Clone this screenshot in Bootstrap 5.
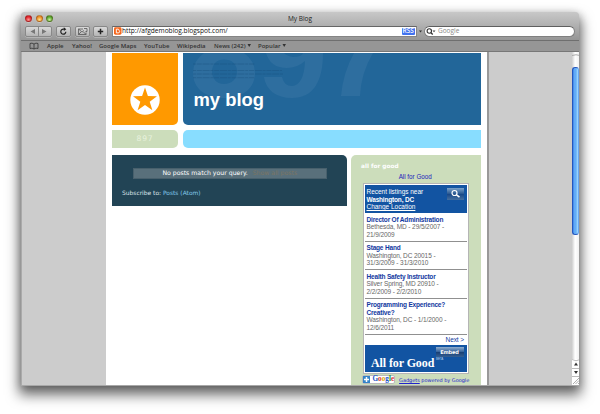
<!DOCTYPE html>
<html lang="en">
<head>
<meta charset="utf-8">
<title>My Blog</title>
<link href="https://cdn.jsdelivr.net/npm/bootstrap@5.3.0/dist/css/bootstrap.min.css" rel="stylesheet">
<style>
html,body{width:600px;height:414px;overflow:hidden}
body{background:#fff;font-family:"Open Sans","Noto Sans",sans-serif;font-size:6.5px;line-height:1;color:#222}
.win{width:558px;height:373px;margin:12px 0 0 21px;border-radius:3px 3px 0 0;box-shadow:0 8px 13px 2px rgba(0,0,0,.57),0 2px 9px rgba(0,0,0,.22)}
.chrome{height:29px;background:linear-gradient(#c8c8c8,#969696);border-radius:3px 3px 0 0;border-bottom:1px solid #6f6f6f}
.titlebar{height:13px;padding-top:2px}
.lights{left:4px;top:3px;gap:3.7px}
.light{width:7px;height:7px;border-radius:50%;border:1px solid rgba(60,20,10,.35);box-shadow:0 .5px 0 #ddd}
.lr{background:radial-gradient(circle at 50% 75%,#ff9b96,#e1222a 65%)}
.ly{background:radial-gradient(circle at 50% 75%,#ffe58a,#ec8d27 65%)}
.lg{background:radial-gradient(circle at 50% 75%,#cdf39b,#56a42c 65%)}
.tools{height:13px;padding:1px 4px 0 3.5px}
.tb{height:11px;border:1px solid #888;border-radius:2px;background:linear-gradient(#d9d9d9,#b4b4b4);box-shadow:0 .5px 0 #ccc}
.url{width:306px;height:10.5px;background:#fff;border:1px solid #858585;border-top-color:#666;margin-left:4px;font-size:6.6px;color:#111;padding:0 1px}
.rss{background:#4173ef;color:#fff;border-radius:1px;width:13.5px;height:7.5px;font-size:6.5px;font-weight:600}
.search{width:151.5px;height:11px;border-radius:6px;background:#fff;border:1px solid #808080;border-top-color:#5e5e5e;font-size:6.5px;color:#888}
.marks{height:11px;background:#969696;border-bottom:1px solid #777;font-weight:600;font-size:6px;color:#333;padding-left:8px;white-space:nowrap}
.view{height:333.5px;background:#ccc;border-left:1px solid #aaa;border-bottom:1px solid #a8a8a8;overflow:hidden}
.page{width:383px;margin-left:84px;background:#fff;border-right:2px solid #999;padding:1px 6px 0;font-family:"DejaVu Sans",sans-serif}
.logo{width:66px;height:72px;background:#f90;border-radius:0 0 5px 0}
.hero{width:297.5px;height:72px;background:#226699;border-radius:0 0 0 5px;overflow:hidden}
.hero h1{left:10.5px;top:37px;font:bold 18.4px/20px "Liberation Sans",sans-serif;color:#fff;white-space:nowrap}
.tag{width:66px;height:18px;background:#cdb;border-radius:0 5px 5px 0;color:#e8f2de;font-size:7.6px;letter-spacing:.8px}
.bar{width:297.5px;height:18px;background:#8df;border-radius:5px 0 0 5px}
.posts{width:235px;height:51.5px;background:#245;border-radius:0 5px 0 0;color:#dde6ea;padding:13px 21px 0}
.status{height:11px;background:#59707b;border:1px solid #48606c;font-size:6.2px;color:#fff;white-space:nowrap;width:193.5px}
.sub{font-size:5.95px;margin:11px 0 0 -11px}
.side{width:129.5px;height:240px;background:#cdb;border-radius:5px 0 0 0;padding:8px 12px 0}
.side h2{font:bold 5.8px/7px "DejaVu Sans",sans-serif;color:#fff;margin:0 0 0 -2px}
.aglink{font:6.3px/8px "Liberation Sans",sans-serif;color:#22b;margin:3px 1px 0 0}
.gadget{width:105.5px;height:191px;background:#fff;border:1px solid #b5b5b5;padding:1px;margin-top:2.5px;font:6.5px/7.6px "Liberation Sans",sans-serif;color:#666;letter-spacing:-.09px}
.gadget b{color:#1138a0;letter-spacing:-.18px}
.near{height:28px;background:#1254a2;color:#fff;padding:3px 1.5px;letter-spacing:-.02px}
.near .glass{margin-right:1px}
.near b{color:#fff}
.item{padding:2.6px 1.5px 0;border-bottom:1px solid #909090;white-space:nowrap}
.glass{width:17px;height:12px;background:linear-gradient(#7ba2cb,#26558f 50%,#174787 51%,#456f9f)}
.foot{height:27px;background:#1254a2}
.foot .nm{font:bold 12px/12px "Liberation Serif",serif;color:#fff;left:6px;top:12.5px;white-space:nowrap;letter-spacing:-.1px}
.embed{right:3px;top:2.5px;width:28px;height:10px;background:linear-gradient(#92aece,#315f98 50%,#173f75 51%,#365f91);color:#fff;font:bold 5px/11px "DejaVu Sans",sans-serif;letter-spacing:-.1px}
.pow{font:4.95px/6px "DejaVu Sans",sans-serif;color:#22c;white-space:nowrap;margin-left:-1px}
.gbtn{width:34.5px;height:9px;background:#fff;border:1px solid #bbb;border-radius:2px;font:bold 7.2px/7px "Liberation Serif",serif}
.sb{width:7.5px;background:linear-gradient(90deg,#cfcfcf,#fff 45%,#f1f1f1)}
.thumb{height:168px;margin-top:6px;border-radius:3px;border:1px solid #2457be;border-right-color:#6aa5ee;background:linear-gradient(90deg,#3b83e8,#6fb6fa 40%,#5ca8f6 55%,#a8e0ff)}
</style>
</head>
<body>
<div class="win">
 <div class="chrome">
  <div class="titlebar position-relative d-flex justify-content-center align-items-center">
   <div class="lights position-absolute d-flex"><i class="light lr"></i><i class="light ly"></i><i class="light lg"></i></div>
   <span>My Blog</span>
  </div>
  <div class="tools d-flex align-items-start">
   <div class="tb d-flex" style="width:27px"><svg width="25" height="9"><path d="M12.500 0V9" stroke="#888"/><path d="M9 2V7L4.500 4.500ZM16 2V7L20.500 4.500Z" fill="#777"/></svg></div>
   <div class="tb" style="width:15px;margin-left:4px"><svg class="d-block" width="13" height="9"><path d="M8.800 4.700A2.500 2.500 0 1 1 6.500 2.200H7.500" fill="none" stroke="#222" stroke-width="1.200"/><path d="M6.800 .3L9.300 2.200 6.800 4Z" fill="#222"/></svg></div>
   <div class="tb" style="width:15px;margin-left:4px"><svg class="d-block" width="13" height="9" fill="none" stroke="#555" stroke-width=".8"><path d="M2.500 2H7M2.500 2V7.500H10V5.500M2.500 2L6 5 8 3.500M2.500 7.500L5 5M10 7.500L7.500 5M8 1.500H11V4.500H9.500"/></svg></div>
   <div class="tb" style="width:15px;margin-left:3.5px"><svg class="d-block" width="13" height="9"><path d="M6.500 1.800V7.200M3.800 4.500H9.200" stroke="#222" stroke-width="1.500"/></svg></div>
   <div class="url d-flex align-items-center">
    <svg width="7.500" height="8" viewBox="0 0 8 8"><rect width="8" height="8" rx="1.500" fill="#f5661c"/><path d="M2.500 2H4.300Q5.300 2 5.300 3.500Q6 3.600 6 4.500Q6 6 4.500 6H2.500Z" fill="none" stroke="#fff" stroke-width="1"/></svg>
    <span style="margin-left:.5px">http://afgdemoblog.blogspot.com/</span>
    <span class="rss ms-auto d-flex align-items-center justify-content-center">RSS</span>
   </div>
   <svg width="3" height="11" style="margin-left:2px"><path d="M0 4.500H3L1.500 6.500Z" fill="#333"/></svg>
   <div class="search d-flex align-items-center" style="margin-left:2px"><svg width="12" height="9"><circle cx="4.300" cy="4" r="2.200" fill="none" stroke="#333" stroke-width="1.100"/><path d="M6 5.700L7.700 7.500" stroke="#333" stroke-width="1.300"/><path d="M7.500 3.500H10.500L9 5.200Z" fill="#444"/></svg><span style="margin-left:1px">Google</span></div>
  </div>
 </div>
 <div class="marks d-flex align-items-center">
  <svg width="10" height="8" fill="none" stroke="#333" stroke-width=".8"><path d="M5 2Q3 .5 1 1.500V6.500Q3 5.500 5 7Q7 5.500 9 6.500V1.500Q7 .5 5 2V7"/></svg>
  <span style="width:25px;margin-left:8px">Apple</span><span style="width:27px">Yahoo!</span><span style="width:45px">Google Maps</span><span style="width:33px">YouTube</span><span style="width:37px">Wikipedia</span>
  <span style="width:44px">News (242)<svg width="5" height="4"><path d="M1.500 0H5L3.200 3Z" fill="#333"/></svg></span><span>Popular<svg width="5" height="4"><path d="M1.500 0H5L3.200 3Z" fill="#333"/></svg></span>
 </div>
 <div class="view d-flex">
  <div class="page flex-shrink-0">
   <div class="d-flex" style="gap:5px">
    <div class="logo d-flex justify-content-center"><svg width="30" height="30" viewBox="-15 -15 30 30" style="margin-top:32px"><circle r="14.700" fill="#fff"/><path d="M0 -12.500L2.900 -3.900 12 -3.800 4.700 1.700 7.400 10.300 0 5.100 -7.400 10.300 -4.700 1.700 -12 -3.800 -2.900 -3.900Z" fill="#f90"/></svg></div>
    <div class="hero position-relative"><svg class="d-block" width="297" height="72"><g fill="#2e6e9f"><path fill-rule="evenodd" d="M21 0Q10 8 10 20C10 35 22 45 41 45S72 35 72 20Q72 8 61 0ZM41 6.500C33 6.500 29 12 29 18.500S33 31 41 31 54 26 54 18.500 49 6.500 41 6.500Z"/><path d="M83 0C86 10 93 15 104 15Q114 15 122 8Q121 32 109 33Q101 33 99 24H81C83 37 93 45 109 45C130 45 140 29 140 0H120Q119 4 110 4Q104 3 101 0Z"/><path d="M171 0Q160 20 158 43H177Q178 20 190 0Z"/></g><g stroke="#1b527f" stroke-width=".8" stroke-dasharray="3 .8 5 .8 7 .8" opacity=".5"><path d="M10 11H72M10 17.500H99M10 21H100M10 24.700H72"/></g></svg><h1 class="position-absolute m-0">my blog</h1></div>
   </div>
   <div class="d-flex" style="gap:5px;margin-top:5px"><div class="tag d-flex align-items-center justify-content-center">897</div><div class="bar"></div></div>
   <div class="d-flex align-items-start" style="gap:4px;margin-top:6.5px">
    <div class="posts"><div class="status d-flex align-items-center justify-content-center"><span>No posts match your query.</span><span style="color:#7b7563;margin-left:5px">Show all posts</span></div><div class="sub"><span>Subscribe to:</span> <span style="color:#80c8ea">Posts (Atom)</span></div></div>
    <div class="side">
     <h2>all for good</h2>
     <div class="aglink text-center">All for Good</div>
     <div class="gadget">
      <div class="near d-flex justify-content-between"><div>Recent listings near<br><b>Washington, DC</b><br><u>Change Location</u></div><div class="glass"><svg class="d-block" width="17" height="12" fill="none" stroke="#fff"><circle cx="7.500" cy="5" r="2.500" stroke-width="1.200"/><path d="M9.500 6.800L12.500 9.200" stroke-width="1.500"/></svg></div></div>
      <div class="item" style="height:28.5px"><b>Director Of Administration</b><br>Bethesda, MD - 29/5/2007 -<br>21/9/2009</div>
      <div class="item" style="height:28.5px"><b>Stage Hand</b><br>Washington, DC 20015 -<br>31/3/2009 - 31/3/2010</div>
      <div class="item" style="height:28.5px"><b>Health Safety Instructor</b><br>Silver Spring, MD 20910 -<br>2/2/2009 - 2/2/2010</div>
      <div class="item" style="height:36px"><b>Programming Experience?<br>Creative?</b><br>Washington, DC - 1/1/2000 -<br>12/6/2011</div>
      <div class="text-end" style="color:#1138a0;height:10px;padding:1px 2.5px 0">Next &gt;</div>
      <div class="foot position-relative"><span class="nm position-absolute">All for Good</span><span class="embed position-absolute text-center">Embed</span><span class="position-absolute" style="font-size:3px;color:#b8cde5;left:71px;top:11.5px">BETA</span></div>
     </div>
     <div class="pow d-flex align-items-center" style="margin-top:.5px"><span class="gbtn d-flex align-items-center"><svg width="8" height="7"><rect width="7" height="7" fill="#3484c8"/><path d="M3.500 1V6M1 3.500H6" stroke="#fff" stroke-width="1.500"/></svg><span style="margin-left:1.5px"><span style="color:#25c">G</span><span style="color:#d33">o</span><span style="color:#da0">o</span><span style="color:#25c">g</span><span style="color:#292">l</span><span style="color:#d33">e</span></span></span><span style="margin:2px 0 0 4px"><u>Gadgets</u> powered by Google</span></div>
    </div>
   </div>
  </div>
  <div class="sb ms-auto d-flex flex-column"><svg class="d-block flex-shrink-0" width="8" height="9"><path d="M0 3.500Q4 2 8 3.500" fill="none" stroke="#aaa"/></svg><div class="thumb flex-shrink-0"></div>
   <svg class="mt-auto d-block flex-shrink-0" width="8" height="26"><path d="M0 0V26H8V0Z" fill="#fff"/><path d="M0 .5Q4 3 8 .5M0 9.500H8M0 17.500H8" fill="none" stroke="#bbb"/><path d="M2 6.500H6L4 3.500ZM2 12H6L4 15Z" fill="#333"/><path d="M1 25L7 19M3.500 25L7 21.500M6 25L7 24" stroke="#999" stroke-width=".8"/></svg></div>
 </div>
</div>
<script src="https://cdn.jsdelivr.net/npm/bootstrap@5.3.0/dist/js/bootstrap.bundle.min.js"></script>
</body>
</html>
